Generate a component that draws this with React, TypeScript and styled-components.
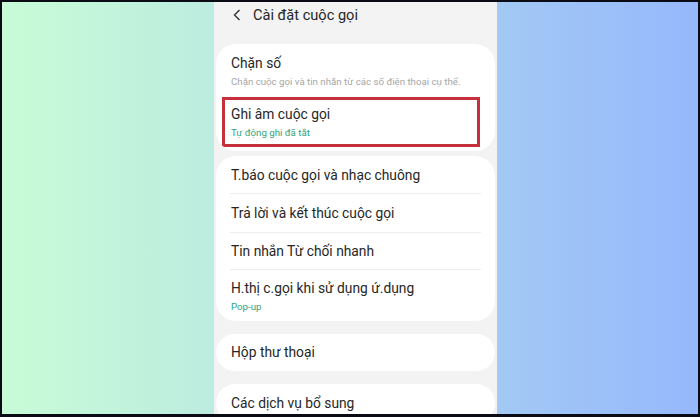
import React from "react";
import styled, { createGlobalStyle } from "styled-components";

const GlobalStyle = createGlobalStyle`
  html, body {
    margin: 0;
    padding: 0;
    background: #000;
  }
  * {
    box-sizing: border-box;
  }
`;

const Frame = styled.div`
  width: 700px;
  height: 417px;
  border: 2px solid #0b0b16;
  border-bottom-width: 3px;
  background: linear-gradient(90deg, #c8fcd6 0%, #bdece0 30%, #a3c9f4 71%, #96b8fc 100%);
  display: grid;
  grid-template-columns: 212px 283px 1fr;
  overflow: hidden;
  font-family: Roboto, "Noto Sans", sans-serif;
`;

const Phone = styled.div`
  grid-column: 2;
  background: #f3f3f3;
  padding: 0 2px;
  display: flex;
  flex-direction: column;
  overflow: hidden;
`;

const Header = styled.div`
  height: 42px;
  flex-shrink: 0;
  display: flex;
  align-items: center;
  padding: 0 0 16px 17px;
  gap: 12px;
  color: #262626;
  font-size: 14.6px;
`;

const Card = styled.div<{ $gap?: number }>`
  background: #ffffff;
  border-radius: 20px;
  margin-bottom: ${(p) => p.$gap ?? 13}px;
  flex-shrink: 0;
  display: flex;
  flex-direction: column;
  overflow: hidden;
`;

const Row = styled.div<{ $h: number; $divider?: boolean }>`
  height: ${(p) => p.$h}px;
  padding: 0 16px 0 15px;
  display: flex;
  flex-direction: column;
  justify-content: center;
  position: relative;
  ${(p) =>
    p.$divider &&
    `&::after {
      content: "";
      position: absolute;
      left: 14px;
      right: 14px;
      bottom: 0;
      height: 1px;
      background: #eeeeee;
    }`}
`;

const Highlight = styled.div`
  height: 50px;
  margin: 0 15px 4px 6px;
  border: 3px solid #c4313b;
  padding: 0 0 0 6px;
  display: flex;
  flex-direction: column;
  justify-content: center;
`;

const Title = styled.div`
  font-size: 13.8px;
  color: #262626;
  line-height: 19px;
  white-space: nowrap;
`;

const Sub = styled.div<{ $accent?: boolean }>`
  font-size: 9.7px;
  line-height: 13px;
  margin-top: 2px;
  color: ${(p) => (p.$accent ? "#2fa37c" : "#a6a6a6")};
  white-space: nowrap;
`;

const Back = () => (
  <svg width="8" height="12" viewBox="0 0 8 12" fill="none">
    <polyline points="6.5,1 1.5,6 6.5,11" stroke="#333" strokeWidth="1.4" />
  </svg>
);

export default function App() {
  return (
    <>
      <GlobalStyle />
      <Frame>
        <Phone>
          <Header>
            <Back />
            <span>Cài đặt cuộc gọi</span>
          </Header>

          <Card $gap={5}>
            <Row $h={53}>
              <Title>Chặn số</Title>
              <Sub>Chặn cuộc gọi và tin nhắn từ các số điện thoại cụ thể.</Sub>
            </Row>
            <Highlight>
              <Title>Ghi âm cuộc gọi</Title>
              <Sub $accent>Tự động ghi đã tắt</Sub>
            </Highlight>
          </Card>

          <Card>
            <Row $h={38} $divider>
              <Title>T.báo cuộc gọi và nhạc chuông</Title>
            </Row>
            <Row $h={39} $divider>
              <Title>Trả lời và kết thúc cuộc gọi</Title>
            </Row>
            <Row $h={37} $divider>
              <Title>Tin nhắn Từ chối nhanh</Title>
            </Row>
            <Row $h={51}>
              <Title>H.thị c.gọi khi sử dụng ứ.dụng</Title>
              <Sub $accent>Pop-up</Sub>
            </Row>
          </Card>

          <Card>
            <Row $h={37}>
              <Title>Hộp thư thoại</Title>
            </Row>
          </Card>

          <Card>
            <Row $h={38}>
              <Title>Các dịch vụ bổ sung</Title>
            </Row>
          </Card>
        </Phone>
      </Frame>
    </>
  );
}
